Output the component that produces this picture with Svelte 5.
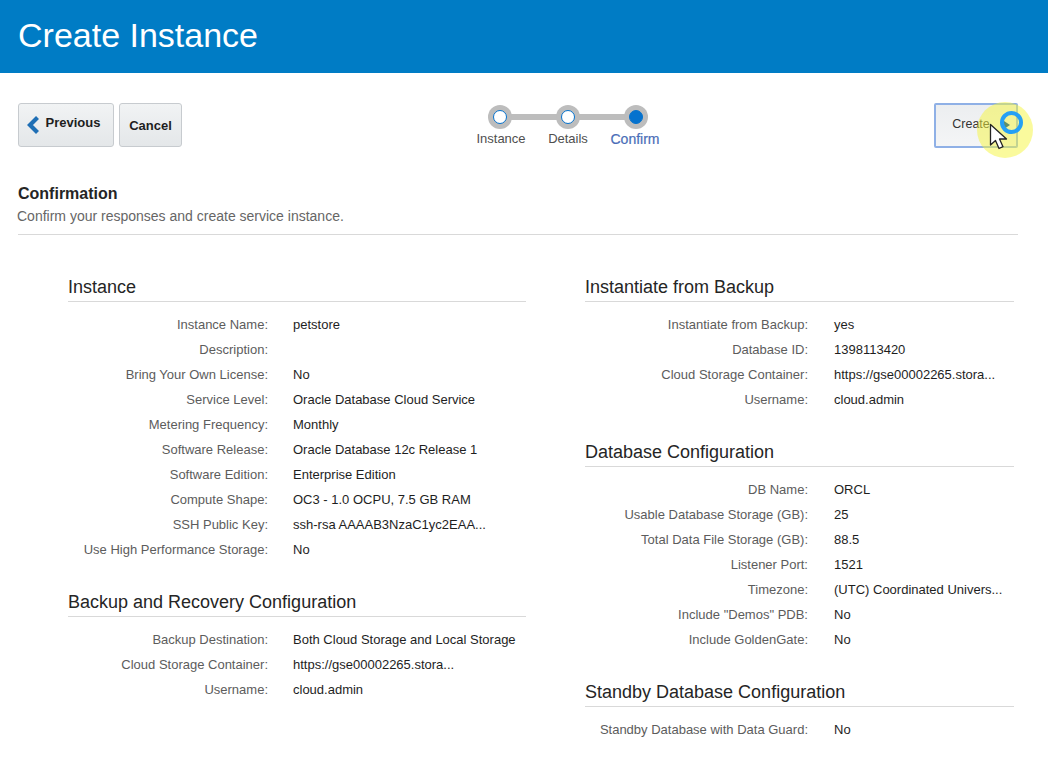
<script>
  const left = [
    { title: 'Instance', rows: [
      ['Instance Name:', 'petstore'], ['Description:', ''], ['Bring Your Own License:', 'No'],
      ['Service Level:', 'Oracle Database Cloud Service'], ['Metering Frequency:', 'Monthly'],
      ['Software Release:', 'Oracle Database 12c Release 1'], ['Software Edition:', 'Enterprise Edition'],
      ['Compute Shape:', 'OC3 - 1.0 OCPU, 7.5 GB RAM'], ['SSH Public Key:', 'ssh-rsa AAAAB3NzaC1yc2EAA...'],
      ['Use High Performance Storage:', 'No'] ] },
    { title: 'Backup and Recovery Configuration', rows: [
      ['Backup Destination:', 'Both Cloud Storage and Local Storage'],
      ['Cloud Storage Container:', 'https://gse00002265.stora...'], ['Username:', 'cloud.admin'] ] }
  ];
  const right = [
    { title: 'Instantiate from Backup', rows: [
      ['Instantiate from Backup:', 'yes'], ['Database ID:', '1398113420'],
      ['Cloud Storage Container:', 'https://gse00002265.stora...'], ['Username:', 'cloud.admin'] ] },
    { title: 'Database Configuration', rows: [
      ['DB Name:', 'ORCL'], ['Usable Database Storage (GB):', '25'], ['Total Data File Storage (GB):', '88.5'],
      ['Listener Port:', '1521'], ['Timezone:', '(UTC) Coordinated Univers...'],
      ['Include "Demos" PDB:', 'No'], ['Include GoldenGate:', 'No'] ] },
    { title: 'Standby Database Configuration', rows: [['Standby Database with Data Guard:', 'No']] }
  ];
  const columns = [{ cls: 'left', sections: left }, { cls: 'right', sections: right }];
  const steps = [
    { label: 'Instance', state: 'done' }, { label: 'Details', state: 'done' }, { label: 'Confirm', state: 'active' }
  ];
</script>

<div class="page">
  <header class="banner"><h1>Create Instance</h1></header>

  <div class="toolbar">
    <div class="actions">
      <button class="btn prev">
        <svg width="13" height="18" viewBox="0 0 13 18"><path d="M10.5 1.5 3 9l7.5 7.500" fill="none" stroke="#1f6fb5" stroke-width="4.200"/></svg>
        <span>Previous</span>
      </button>
      <button class="btn cancel">Cancel</button>
    </div>

    <div class="train">
      <div class="track"></div>
      {#each steps as s}
        <div class="step {s.state}">
          <span class="dot"><span class="inner"></span></span>
          <span class="step-label">{s.label}</span>
        </div>
      {/each}
    </div>

    <div class="create-wrap">
      <button class="btn create">Create</button>
      <span class="halo"></span>
      <svg class="chev" width="8" height="8" viewBox="0 0 8 8"><path d="M1 0l6 4-6 4Z" fill="#5f8f6a"/></svg>
      <span class="spinner"></span>
      <svg class="cursor" width="20" height="28" viewBox="0 0 20 28">
        <path d="M1.500 1.500V22l5-4.500 3.500 8 4-1.800-3.500-7.700H17.500Z" fill="#fff" stroke="#222" stroke-width="1.300" stroke-linejoin="round"/>
      </svg>
    </div>
  </div>

  <section class="intro">
    <h2>Confirmation</h2>
    <p>Confirm your responses and create service instance.</p>
  </section>

  <div class="columns">
    {#each columns as col}
      <div class="col {col.cls}">
        {#each col.sections as sec}
          <div class="sec">
            <h3>{sec.title}</h3>
            {#each sec.rows as r}
              <div class="row"><span class="lbl">{r[0]}</span><span class="val">{r[1]}</span></div>
            {/each}
          </div>
        {/each}
      </div>
    {/each}
  </div>
</div>

<style>
  :global(body) { margin: 0; background: #fff; }
  .page { width: 1048px; height: 782px; overflow: hidden; font-family: "Liberation Sans", Arial, sans-serif; color: #252525; }
  .banner { height: 73px; background: #007cc5; display: flex; align-items: center; padding-left: 18px; }
  h1 { margin: 0; font-size: 34px; font-weight: 400; color: #fff; line-height: 1; position: relative; top: -2px; }

  .toolbar { display: flex; justify-content: space-between; padding: 30px 30px 0 18px; height: 46px; position: relative; }
  .actions { display: flex; gap: 5px; align-items: flex-start; }
  .btn { font-family: inherit; font-size: 13px; font-weight: 700; color: #1e1e1e; border: 1px solid #c7cbcf; border-radius: 3px;
    background: linear-gradient(#f1f3f4, #e4e7e9); padding: 0; height: 44px; display: flex; align-items: center; justify-content: center; }
  .prev { width: 96px; gap: 6px; padding-bottom: 6px; padding-right: 2px; }
  .prev svg { position: relative; top: 3px; margin-left: -3px; }
  .cancel { width: 63px; }

  .train { position: absolute; left: 466px; top: 32px; display: flex; }
  .track { position: absolute; left: 34px; top: 9px; width: 136px; height: 6px; background: #bdbdbd; }
  .step { position: relative; display: flex; flex-direction: column; align-items: center; font-size: 13px; width: 68px; }
  .dot { width: 24px; height: 24px; border-radius: 50%; background: #bdbdbd; display: flex; align-items: center; justify-content: center; }
  .inner { width: 12px; height: 12px; border-radius: 50%; background: #fff; border: 1px solid #0572ce; }
  .active .inner { background: #0572ce; }
  .step-label { margin-top: 2px; line-height: 16px; color: #4f4f4f; white-space: nowrap; }
  .step:nth-of-type(2) .step-label { margin-left: 2px; }
  .active .step-label { color: #4a6eb8; font-size: 14px; -webkit-text-stroke: 0.2px #4a6eb8; margin-right: 2px; }

  .create-wrap { position: relative; width: 84px; height: 46px; }
  .create { width: 84px; height: 45px; font-weight: 400; border: 2px solid #8fb0e6; border-radius: 2px; background: linear-gradient(#eceef0, #f4f5f6); padding-right: 10px; padding-bottom: 4px; font-size: 12.500px; color: #333; }
  .chev { position: absolute; left: 69px; top: 18px; }
  .halo { position: absolute; left: 43px; top: -1px; width: 56px; height: 56px; border-radius: 50%; background: rgba(245, 245, 60, 0.5); }
  .spinner { position: absolute; left: 66px; top: 8px; width: 23px; height: 23px; box-sizing: border-box; border-radius: 50%; border: 4.500px solid #25a0f5; }
  .cursor { position: absolute; left: 55px; top: 20px; }

  .intro { margin: 35px 30px 0 18px; height: 50px; border-bottom: 1px solid #d9d9d9; }
  h2 { margin: 0; font-size: 16px; font-weight: 700; line-height: 20px; color: #252525; }
  p { margin: 3px 0 0 -1px; font-size: 14px; line-height: 18px; color: #666; }

  .columns { display: flex; padding: 0 0 0 68px; }
  .col { display: flex; flex-direction: column; }
  .left { width: 458px; margin-right: 59px; }
  .right { width: 429px; }
  .sec { margin-top: 35px; }
  .right .sec + .sec, .left .sec + .sec { margin-top: 23px; }
  h3 { margin: 0 0 10px; font-size: 18px; font-weight: 400; line-height: 31px; height: 29px; padding-top: 2px; border-bottom: 1px solid #d9d9d9; color: #252525; }
  .row { display: flex; height: 25px; line-height: 25px; font-size: 13px; }
  .lbl { width: 200px; text-align: right; color: #5c5c5c; white-space: nowrap; flex: none; }
  .right .lbl { width: 223px; }
  .val { margin-left: 25px; color: #1e1e1e; white-space: nowrap; }
  .right .val { margin-left: 26px; }
</style>
